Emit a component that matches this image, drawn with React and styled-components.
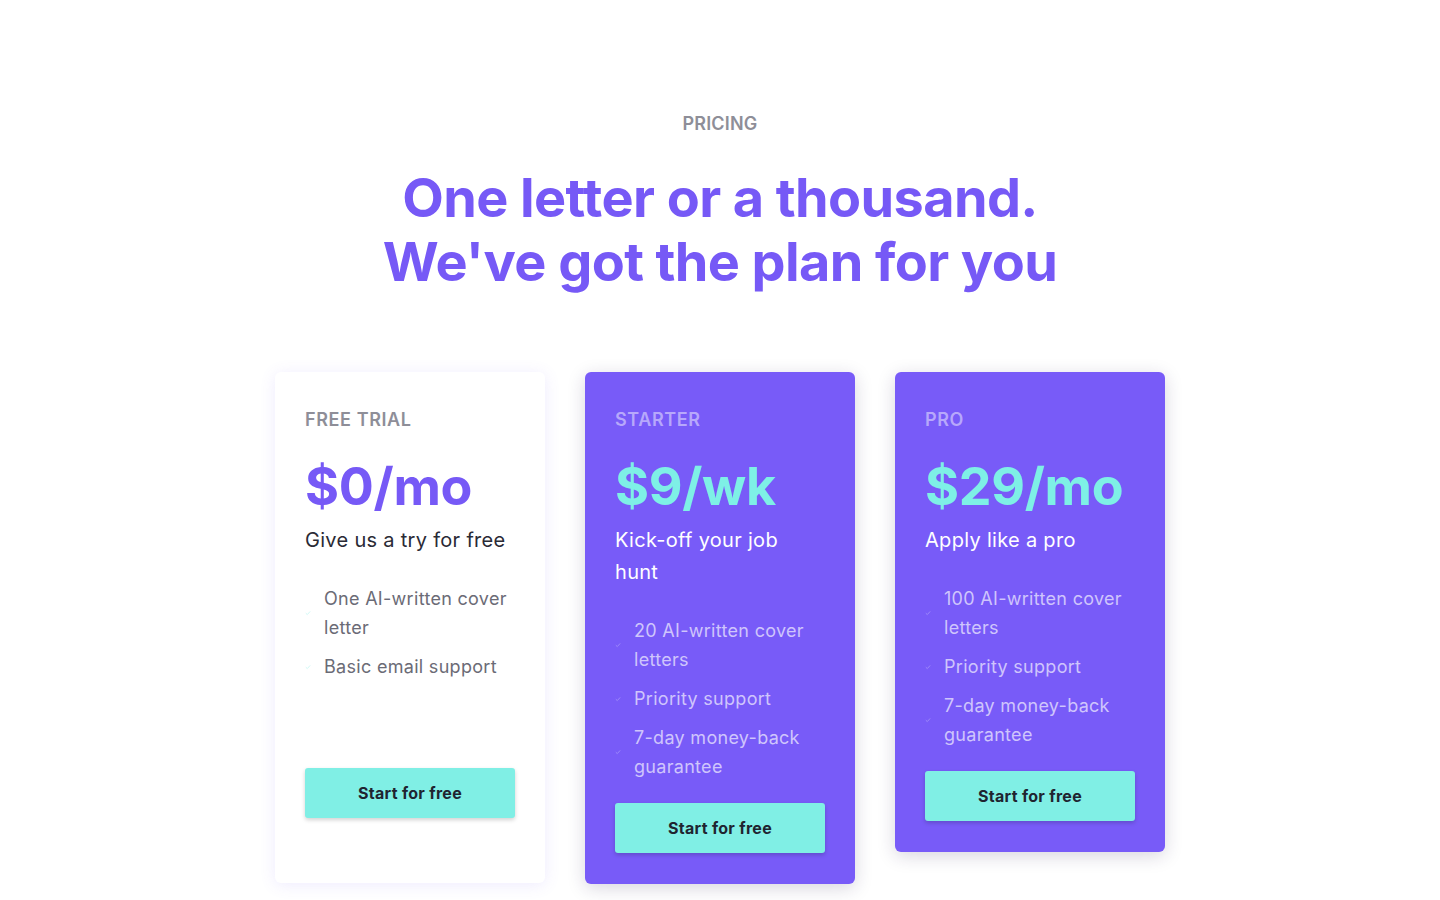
import styled, { createGlobalStyle } from "styled-components";

const GlobalStyle = createGlobalStyle`
  body {
    margin: 0;
    background: #ffffff;
    font-family: Inter, "Noto Sans", sans-serif;
  }
`;

const Section = styled.section`
  display: flex;
  flex-direction: column;
  align-items: center;
  padding: 112px 0 40px;
`;

const Eyebrow = styled.div`
  font-size: 18px;
  line-height: 24px;
  font-weight: 600;
  color: #8e8e98;
  letter-spacing: 0.2px;
`;

const Heading = styled.h1`
  margin: 30px 0 0;
  font-size: 54px;
  line-height: 64px;
  font-weight: 700;
  color: #7659f6;
  text-align: center;
  letter-spacing: -0.6px;
`;

const Cards = styled.div`
  display: flex;
  gap: 40px;
  align-items: flex-start;
  margin-top: 78px;
`;

const Card = styled.div`
  width: 270px;
  box-sizing: border-box;
  min-height: ${(p) => p.$minHeight || 0}px;
  padding: 36px 30px 31px;
  border-radius: 6px;
  display: flex;
  flex-direction: column;
  background: ${(p) => (p.$dark ? "#785bf8" : "#ffffff")};
  box-shadow: ${(p) =>
    p.$dark
      ? "0 4px 18px rgba(40, 30, 80, 0.18)"
      : "0 2px 16px rgba(118, 89, 246, 0.12)"};
`;

const PlanName = styled.div`
  font-size: 18px;
  line-height: 24px;
  font-weight: 600;
  letter-spacing: 0.6px;
  color: ${(p) => (p.$dark ? "#b7a8fb" : "#8e8e98")};
`;

const Price = styled.div`
  margin-top: 24px;
  font-size: 52px;
  line-height: 62px;
  font-weight: 700;
  color: ${(p) => (p.$dark ? "#7ef0e6" : "#7659f6")};
  letter-spacing: -0.3px;
`;

const Tagline = styled.div`
  margin-top: 6px;
  font-size: 20px;
  line-height: 32px;
  letter-spacing: 0.3px;
  color: ${(p) => (p.$dark ? "#ffffff" : "#2a2a35")};
`;

const Features = styled.ul`
  list-style: none;
  margin: 28px 0 0;
  padding: 0;
  min-height: 162px;
  display: flex;
  flex-direction: column;
  gap: 10px;
`;

const Feature = styled.li`
  display: flex;
  align-items: center;
  gap: 13px;
  font-size: 18px;
  line-height: 29px;
  letter-spacing: 0.3px;
  color: ${(p) => (p.$dark ? "#cfc5fc" : "#6b6b76")};
`;

const Check = styled.svg`
  flex: none;
  width: 6px;
  height: 6px;
  opacity: 0.35;
`;

const Button = styled.button`
  margin-top: 22px;
  height: 50px;
  border: none;
  border-radius: 3px;
  background: #80efe5;
  color: #1f2430;
  font-family: inherit;
  font-size: 16px;
  font-weight: 700;
  letter-spacing: 0.3px;
  cursor: pointer;
  box-shadow: 0 2px 4px rgba(0, 0, 0, 0.18);
`;

const plans = [
  {
    name: "FREE TRIAL",
    price: "$0/mo",
    tagline: "Give us a try for free",
    features: ["One AI-written cover letter", "Basic email support"],
    minHeight: 511,
  },
  {
    name: "STARTER",
    price: "$9/wk",
    tagline: "Kick-off your job hunt",
    features: ["20 AI-written cover letters", "Priority support", "7-day money-back guarantee"],
    dark: true,
  },
  {
    name: "PRO",
    price: "$29/mo",
    tagline: "Apply like a pro",
    features: ["100 AI-written cover letters", "Priority support", "7-day money-back guarantee"],
    dark: true,
  },
];

const CheckIcon = ({ dark }) => (
  <Check viewBox="0 0 6 6">
    <path
      d="M0.8 3.2 L2.3 4.6 L5.2 1.4"
      fill="none"
      stroke={dark ? "#e0dbff" : "#80efe5"}
      strokeWidth="1"
    />
  </Check>
);

export default function App() {
  return (
    <>
      <GlobalStyle />
      <Section>
        <Eyebrow>PRICING</Eyebrow>
        <Heading>
          One letter or a thousand.
          <br />
          We've got the plan for you
        </Heading>
        <Cards>
          {plans.map((plan) => (
            <Card key={plan.name} $dark={plan.dark} $minHeight={plan.minHeight}>
              <PlanName $dark={plan.dark}>{plan.name}</PlanName>
              <Price $dark={plan.dark}>{plan.price}</Price>
              <Tagline $dark={plan.dark}>{plan.tagline}</Tagline>
              <Features>
                {plan.features.map((f) => (
                  <Feature key={f} $dark={plan.dark}>
                    <CheckIcon dark={plan.dark} />
                    <span>{f}</span>
                  </Feature>
                ))}
              </Features>
              <Button>Start for free</Button>
            </Card>
          ))}
        </Cards>
      </Section>
    </>
  );
}
